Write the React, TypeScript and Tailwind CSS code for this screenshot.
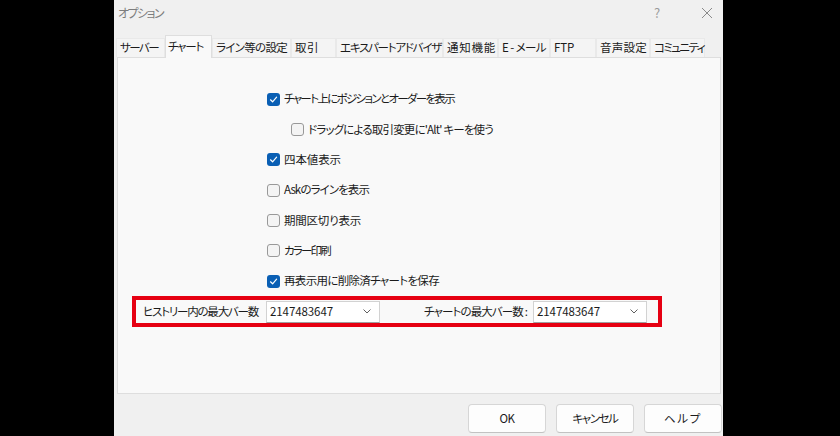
import React, { useLayoutEffect, useRef, useState } from "react";

const font = "[font-family:'Noto_Sans_CJK_JP','Noto_Sans',sans-serif] [font-feature-settings:'palt']";

function Fit({ text, w, className = "" }: { text: string; w: number; className?: string }) {
  const ref = useRef<HTMLSpanElement>(null);
  const [ls, setLs] = useState(0);
  useLayoutEffect(() => {
    const measure = () => {
      const el = ref.current;
      if (!el) return;
      el.style.letterSpacing = "0px";
      const natural = el.getBoundingClientRect().width;
      const n = Array.from(text).length;
      const v = n > 0 ? (w - natural) / n : 0;
      el.style.letterSpacing = v + "px";
      setLs(v);
    };
    measure();
    if ((document as any).fonts?.ready) (document as any).fonts.ready.then(measure);
  }, [text, w]);
  return (
    <span ref={ref} className={`inline-block whitespace-nowrap ${className}`} style={{ letterSpacing: ls }}>
      {text}
    </span>
  );
}

function CheckBox({ checked }: { checked: boolean }) {
  if (checked) {
    return (
      <span className="w-[13px] h-[13px] rounded-[3px] bg-[#0a5fb4] flex items-center justify-center shrink-0">
        <svg width="9" height="9" viewBox="0 0 9 9">
          <polyline points="1.5,4.8 3.6,6.8 7.6,2.2" fill="none" stroke="white" strokeWidth="1.2" strokeLinecap="round" strokeLinejoin="round" />
        </svg>
      </span>
    );
  }
  return <span className="w-[13px] h-[13px] rounded-[3px] bg-[#f4f4f4] border border-[#999999] shrink-0" />;
}

function Row({ checked, label, w, indent }: { checked: boolean; label: string; w: number; indent?: boolean }) {
  return (
    <div className={`h-[30.33px] flex items-center gap-[4px] ${indent ? "pl-[173px]" : "pl-[149px]"}`}>
      <CheckBox checked={checked} />
      <Fit text={label} w={w} className="text-[11.5px] text-[#1b1b1b] leading-none" />
    </div>
  );
}

function Combo() {
  return (
    <div className="w-[114px] h-[22px] bg-white border border-[#d2d2d2] border-b-[#a0a0a0] flex items-center justify-between pl-[3px] pr-[8px]">
      <Fit text="2147483647" w={63} className="text-[11.5px] text-[#1b1b1b] leading-none" />
      <svg width="8" height="5" viewBox="0 0 8 5">
        <polyline points="0.5,0.5 4,4 7.5,0.5" fill="none" stroke="#606060" strokeWidth="1" />
      </svg>
    </div>
  );
}

const tabs: { label: string; w: number; tw: number }[] = [
  { label: "サーバー", w: 49, tw: 38 },
  { label: "チャート", w: 47, tw: 35 },
  { label: "ライン等の設定", w: 79, tw: 71 },
  { label: "取引", w: 45, tw: 24 },
  { label: "エキスパートアドバイザ", w: 107, tw: 101 },
  { label: "通知機能", w: 55, tw: 49 },
  { label: "E - メール", w: 52, tw: 44 },
  { label: "FTP", w: 46, tw: 20 },
  { label: "音声設定", w: 54, tw: 47 },
  { label: "コミュニティ", w: 55, tw: 50 },
];

export default function App() {
  return (
    <div className={`w-[840px] h-[436px] bg-black pl-[114px] overflow-hidden ${font}`}>
      <div className="w-[609px] h-[436px] bg-[#f0f0f0] flex flex-col">
        {/* title bar */}
        <div className="h-[35px] flex items-start pt-[6px]">
          <span className="pl-[4px] text-[12px] text-[#7d7d7d] leading-[14px]">
            <Fit text="オプション" w={45} />
          </span>
          <span className="ml-auto text-[13px] text-[#9a9a9a] leading-[14px] w-[10px]">?</span>
          <span className="ml-[36px] mr-[9px] w-[14px] h-[14px] flex items-center justify-center">
            <svg width="12" height="12" viewBox="0 0 12 12">
              <path d="M1 1L11 11M11 1L1 11" stroke="#8a8a8a" strokeWidth="1" />
            </svg>
          </span>
        </div>
        {/* tabs */}
        <div className="h-[22px] flex items-end pl-[2px] relative z-10">
          {tabs.map((t, i) =>
            i === 1 ? (
              <div
                key={t.label}
                className="h-[23px] -mb-px bg-[#f9f9f9] border border-[#dedede] border-b-0 flex items-center pl-[2px] text-[11.5px] text-[#1b1b1b] leading-none"
                style={{ width: t.w }}
              >
                <Fit text={t.label} w={t.tw} />
              </div>
            ) : (
              <div
                key={t.label}
                className="h-[19px] bg-[#f4f4f4] border border-[#e9e9e9] border-b-0 flex items-center pl-[3px] text-[11.5px] text-[#1b1b1b] leading-none"
                style={{ width: t.w }}
              >
                <Fit text={t.label} w={t.tw} />
              </div>
            )
          )}
        </div>
        {/* panel */}
        <div className="ml-[3px] w-[604px] h-[337px] bg-[#f9f9f9] border border-[#dedede] pt-[26px]">
          <Row checked w={170} label="チャート上にポジションとオーダーを表示" />
          <Row checked={false} w={185} indent label="ドラッグによる取引変更に'Alt' キーを使う" />
          <Row checked w={57} label="四本値表示" />
          <Row checked={false} w={85} label="Askのラインを表示" />
          <Row checked={false} w={77} label="期間区切り表示" />
          <Row checked={false} w={46} label="カラー印刷" />
          <Row checked w={155} label="再表示用に削除済チャートを保存" />
          <div className="ml-[14px] w-[530px] h-[31px] border-[4px] border-[#e60012] flex items-center">
            <span className="w-[130px] pl-[7px] text-[11.5px] text-[#1b1b1b] leading-none">
              <Fit text="ヒストリー内の最大バー数" w={115} />
            </span>
            <Combo />
            <span className="flex-1 flex justify-end pr-[6px] text-[11.5px] text-[#1b1b1b] leading-none">
              <Fit text="チャートの最大バー数 :" w={103} />
            </span>
            <Combo />
            <span className="w-[11px]" />
          </div>
        </div>
        {/* buttons */}
        <div className="flex justify-end gap-[10px] pt-[10px] pr-[1px]">
          {[
            { t: "OK", w: 15 },
            { t: "キャンセル", w: 45 },
            { t: "ヘルプ", w: 38 },
          ].map((b) => (
            <div
              key={b.t}
              className="w-[78px] h-[29px] bg-[#fdfdfd] border border-[#d6d6d6] border-b-[#c2c2c2] rounded-[4px] flex items-center justify-center text-[11.5px] text-[#1b1b1b] leading-none"
            >
              <Fit text={b.t} w={b.w} />
            </div>
          ))}
        </div>
      </div>
    </div>
  );
}
